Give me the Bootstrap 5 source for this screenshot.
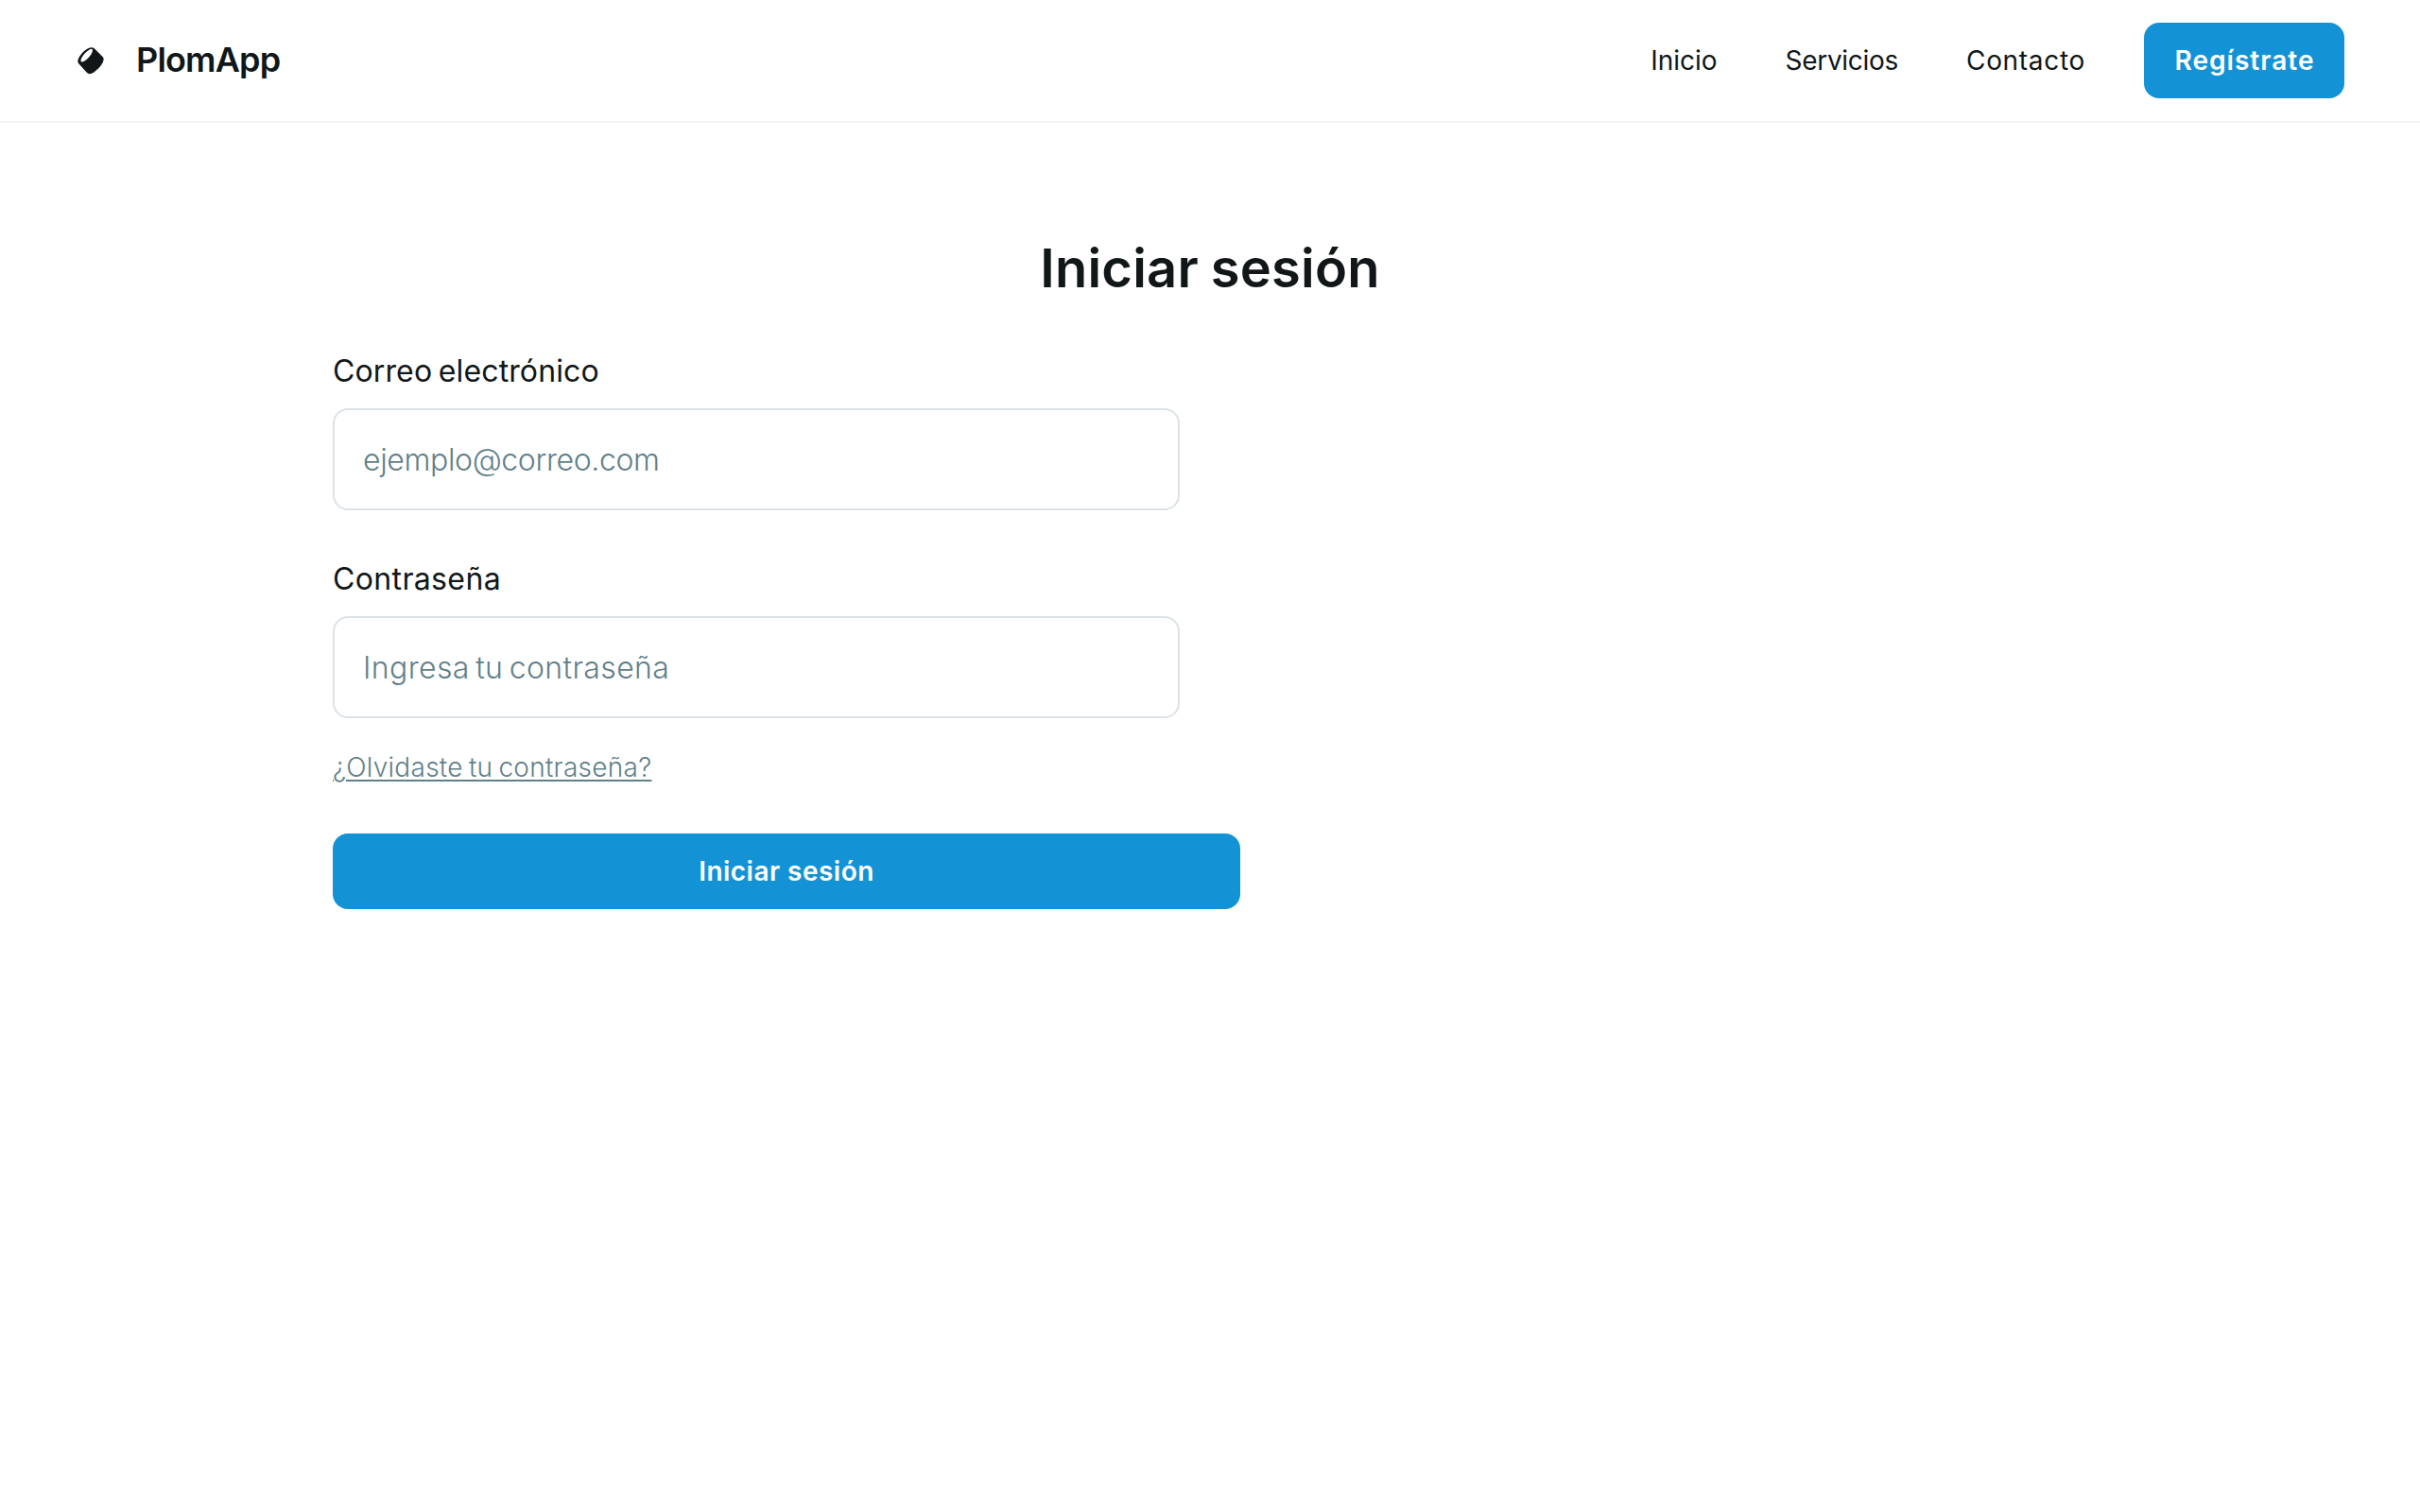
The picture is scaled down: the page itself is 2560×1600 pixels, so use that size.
<!DOCTYPE html>
<html lang="es">
<head>
<meta charset="utf-8">
<meta name="viewport" content="width=device-width, initial-scale=1">
<title>PlomApp</title>
<link href="https://cdn.jsdelivr.net/npm/bootstrap@5.3.0/dist/css/bootstrap.min.css" rel="stylesheet">
<style>
:root{--ink:#111718;--muted:#617f89;--line:#dbe2e6;--accent:#1393d5}
body{font-family:Inter,sans-serif;color:var(--ink);background:#fff;min-height:100vh;font-size:32px;line-height:48px}
.site-header{height:130px;padding:0 80px;border-bottom:2px solid #f0f4f4}
.site-brand{gap:32px;color:var(--ink);font-size:36px;font-weight:600;line-height:46px;letter-spacing:-.83px}
.site-brand span{padding-bottom:2px}
.site-nav{gap:72px;padding-right:62px}
.site-nav .nav-link{padding:0;color:var(--ink);font-size:28px;line-height:42px;font-weight:400}
.track-tight{letter-spacing:-.3px}
.track-wide{letter-spacing:.69px}
.btn-accent{--bs-btn-bg:var(--accent);--bs-btn-color:#fff;--bs-btn-hover-bg:#0f82bd;--bs-btn-hover-color:#fff;border:0;border-radius:16px;height:80px;font-size:28px;font-weight:600;line-height:42px;padding:0;letter-spacing:.48px}
.btn-signup{width:212px;padding:19px 0 0 1px;letter-spacing:1.04px}
.login-panel{width:1920px;padding:119px 32px 0}
.login-title{font-size:56px;line-height:70px;font-weight:600;letter-spacing:.22px;word-spacing:-1.5px;margin-bottom:50px}
.login-form{width:960px}
.field{width:896px;margin-bottom:49px}
.field .form-label{display:block;line-height:48px;margin-bottom:15px}
.field .form-control{height:108px;border:2px solid var(--line);border-radius:16px;padding:0 30px;font-size:32px;color:var(--ink);background:#fff}
.field .form-control::placeholder{color:var(--muted);opacity:1;font-weight:300}
.label-mail{letter-spacing:.12px;word-spacing:-2.5px}
.label-pass{letter-spacing:.36px}
.input-mail{letter-spacing:-.37px}
.input-pass{letter-spacing:.38px;word-spacing:-3px}
.forgot{display:block;color:var(--muted);font-size:28px;line-height:42px;font-weight:300;letter-spacing:.27px;word-spacing:-2px;margin:-17px 0 49px;text-decoration-thickness:2px;text-underline-offset:3px}
.forgot:hover{color:var(--ink)}
</style>
</head>
<body>
<header class="site-header d-flex align-items-center justify-content-between">
  <a href="#" class="site-brand d-flex align-items-center text-decoration-none">
    <svg width="32" height="32" viewBox="0 0 32 32" aria-hidden="true">
      <path fill="currentColor" d="M3 19C1 16 4 11 8 7C12 3.2 17 1 19.5 3L28.5 12C31.5 14.5 28 20.5 24 24.5C20 28.5 15 32 12 29Z"/>
      <ellipse cx="11.7" cy="10.7" rx="8.8" ry="3" transform="rotate(-48 11.7 10.7)" fill="#fff"/>
    </svg>
    <span>PlomApp</span>
  </a>
  <div class="d-flex align-items-center">
    <nav class="site-nav nav flex-nowrap">
      <a class="nav-link" href="#">Inicio</a>
      <a class="nav-link track-tight" href="#">Servicios</a>
      <a class="nav-link track-wide" href="#">Contacto</a>
    </nav>
    <a href="#" class="btn btn-accent btn-signup">Regístrate</a>
  </div>
</header>
<main class="login-panel mx-auto">
  <h1 class="login-title text-center">Iniciar sesión</h1>
  <form class="login-form">
    <div class="field">
      <label class="form-label label-mail" for="email">Correo electrónico</label>
      <input type="email" id="email" class="form-control input-mail" placeholder="ejemplo@correo.com">
    </div>
    <div class="field mb-5">
      <label class="form-label label-pass" for="password">Contraseña</label>
      <input type="password" id="password" class="form-control input-pass" placeholder="Ingresa tu contraseña">
    </div>
    <a href="#" class="forgot">¿Olvidaste tu contraseña?</a>
    <button type="button" class="btn btn-accent w-100">Iniciar sesión</button>
  </form>
</main>
<script src="https://cdn.jsdelivr.net/npm/bootstrap@5.3.0/dist/js/bootstrap.bundle.min.js"></script>
</body>
</html>
